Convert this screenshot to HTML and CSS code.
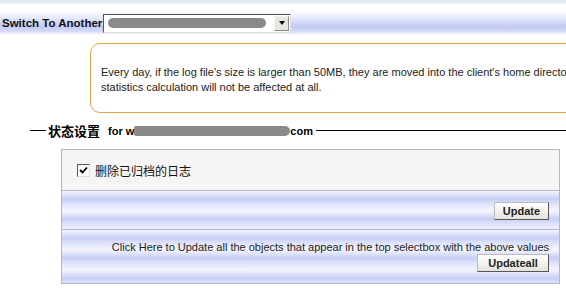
FILE: index.html
```html
<!DOCTYPE html>
<html>
<head>
<meta charset="utf-8">
<link rel="stylesheet" href="styles.css">
</head>
<body>
<div class="topline"></div>
<div class="switch-bar">
  <span class="switch-label">Switch To Another</span>
  <div class="select">
    <span class="redact-pill"></span>
    <span class="select-btn"><span class="arrow"></span></span>
  </div>
</div>
<div class="notice">
  <p>Every day, if the log file's size is larger than 50MB, they are moved into the client's home directory, so the<br>statistics calculation will not be affected at all.</p>
</div>
<div class="legend">
  <span class="legend-line short"></span>
  <span class="legend-title">状态设置</span>
  <span class="legend-for">for w</span><span class="redact-bar"></span><span class="legend-for">com</span>
  <span class="legend-line long"></span>
</div>
<div class="panel">
  <div class="row row-check">
    <span class="checkbox"><svg width="9" height="9" viewBox="0 0 9 9"><path d="M1 4 L3.5 6.5 L8 1.5" fill="none" stroke="#000" stroke-width="1.8"/></svg></span>
    <span class="check-label">删除已归档的日志</span>
  </div>
  <div class="row row-update">
    <button class="btn btn-update">Update</button>
  </div>
  <div class="row row-all">
    <p class="all-text">Click Here to Update all the objects that appear in the top selectbox with the above values</p>
    <button class="btn btn-all">Updateall</button>
  </div>
</div>
</body>
</html>
```
FILE: styles.css
```css
html, body {
  margin: 0;
  padding: 0;
  background: #ffffff;
  overflow: hidden;
}
body {
  font-family: "Liberation Sans", Arial, sans-serif;
  font-size: 11px;
  color: #000;
  width: 566px;
}
.topline {
  height: 4px;
  background: linear-gradient(#dfe6ef, #eef2f7);
}
.switch-bar {
  margin-top: 7px;
  height: 24px;
  display: flex;
  align-items: center;
  background: linear-gradient(#ffffff 0%, #e4e8fb 30%, #c3caf3 65%, #d6dbf7 85%, #ffffff 100%);
}
.switch-label {
  font-weight: bold;
  font-size: 11.5px;
  padding-left: 2px;
  width: 103px;
  box-sizing: border-box;
  white-space: nowrap;
  color: #111;
}
.select {
  box-sizing: border-box;
  width: 188px;
  height: 19px;
  border: 1px solid #555;
  border-right-color: #ddd;
  border-bottom-color: #ddd;
  background: #fff;
  display: flex;
  align-items: center;
  justify-content: space-between;
  padding: 0 1px 0 4px;
}
.redact-pill {
  width: 158px;
  height: 10px;
  border-radius: 5px;
  background: #8a8a8a;
}
.select-btn {
  width: 15px;
  height: 15px;
  box-sizing: border-box;
  background: #e8e6de;
  border: 1px solid #888;
  border-top-color: #f4f4f4;
  border-left-color: #f4f4f4;
  display: flex;
  align-items: center;
  justify-content: center;
}
.arrow {
  width: 0;
  height: 0;
  border-left: 3.5px solid transparent;
  border-right: 3.5px solid transparent;
  border-top: 4px solid #000;
}
.notice {
  margin: 8px 0 0 90px;
  width: 520px;
  height: 70px;
  box-sizing: border-box;
  border: 1px solid #e3a54c;
  border-radius: 10px;
  display: flex;
  align-items: center;
  padding: 4px 0 0 10px;
}
.notice p {
  margin: 0;
  line-height: 15px;
  white-space: nowrap;
  color: #222;
}
.legend {
  margin: 11px 0 0 30px;
  height: 13px;
  display: flex;
  align-items: center;
  white-space: nowrap;
}
.legend-line {
  height: 1px;
  background: #000;
}
.legend-line.short {
  width: 16px;
  margin-right: 2px;
}
.legend-line.long {
  flex: 1;
  margin-left: 3px;
}
.legend-title {
  font-family: "Noto Sans CJK SC", sans-serif;
  font-weight: bold;
  font-size: 13px;
  margin-right: 8px;
}
.legend-for {
  font-weight: bold;
}
.redact-bar {
  width: 156px;
  height: 10px;
  background: #8a8a8a;
  border-radius: 2px 5px 5px 2px;
}
.panel {
  margin: 12px 0 0 61px;
  width: 499px;
  box-sizing: border-box;
  border: 1px solid #b3b6c6;
}
.row {
  box-sizing: border-box;
}
.row-check {
  height: 41px;
  background: #f5f5f5;
  border-bottom: 1px solid #b3b6c6;
  display: flex;
  align-items: center;
  padding-left: 15px;
}
.checkbox {
  width: 13px;
  height: 13px;
  box-sizing: border-box;
  border: 1px solid #555;
  border-color: #555 #ddd #ddd #555;
  background: #fff;
  display: flex;
  align-items: center;
  justify-content: center;
  margin-right: 5px;
}
.check-label {
  font-family: "Noto Sans CJK SC", sans-serif;
  font-size: 12px;
  color: #111;
}
.row-update, .row-all {
  background: repeating-linear-gradient(#f4f5fe 0px, #c7cef5 8px, #dfe3fb 13px, #f4f5fe 20px);
}
.row-update {
  height: 39px;
  border-bottom: 1px solid #b3b6c6;
  display: flex;
  justify-content: flex-end;
  align-items: flex-start;
  padding: 11px 10px 0 0;
}
.row-all {
  height: 53px;
  display: flex;
  flex-direction: column;
  align-items: flex-end;
  padding: 11px 10px 0 0;
}
.all-text {
  margin: 0;
  line-height: 13px;
  white-space: nowrap;
  color: #222;
}
.btn {
  font-family: "Liberation Sans", Arial, sans-serif;
  font-weight: bold;
  font-size: 11px;
  color: #222;
  height: 18px;
  padding: 0;
  background: linear-gradient(#ffffff, #f0efe9 60%, #e4e2da);
  border: 1px solid #555;
  border-top-color: #bbb;
  border-left-color: #bbb;
  border-radius: 0;
}
.btn-update {
  width: 55px;
}
.btn-all {
  width: 72px;
}
```
